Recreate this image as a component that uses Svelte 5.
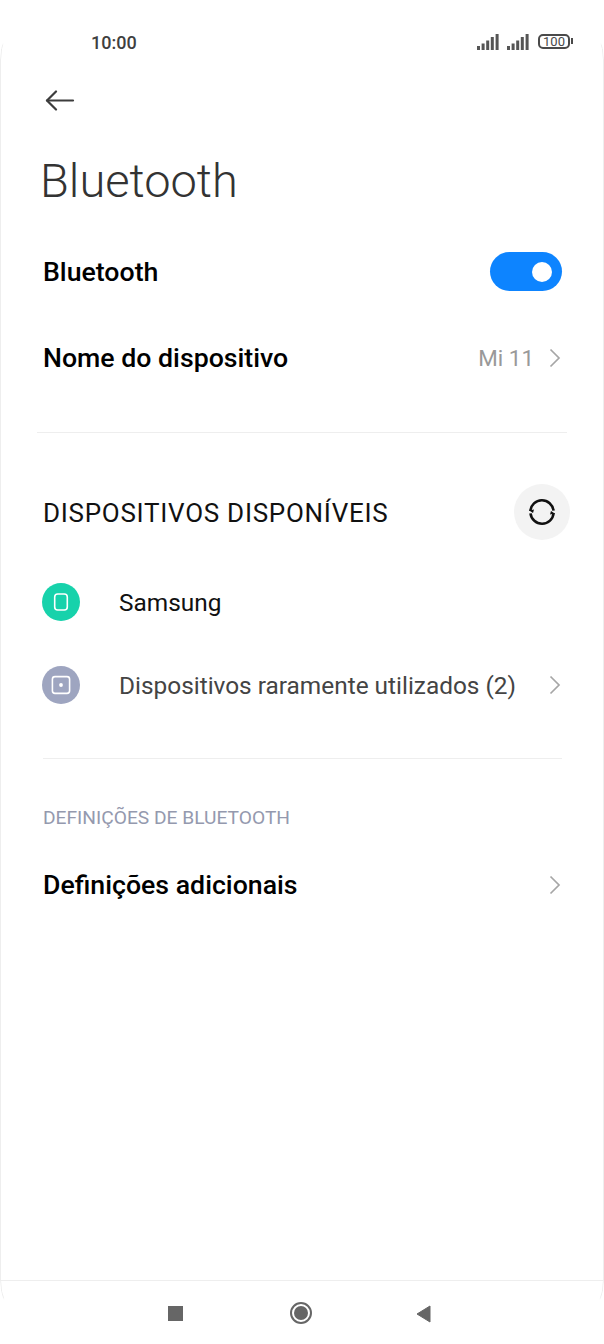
<script>
  const cellular = [0, 1];
</script>

<div class="phone">
  <div class="screen">
    <header class="status">
      <span class="time">10:00</span>
      <div class="status-icons">
        {#each cellular as sim}
          <svg class="signal" width="22" height="16" viewBox="0 0 22 16" data-sim={sim}>
            <rect x="0" y="12" width="3" height="4" />
            <rect x="4.6" y="9.5" width="3" height="6.5" />
            <rect x="9.2" y="6.5" width="3" height="9.5" />
            <rect x="13.8" y="3" width="3" height="13" />
            <rect x="18.6" y="0" width="3" height="16" />
          </svg>
        {/each}
        <div class="battery"><span>100</span></div>
      </div>
    </header>

    <button class="back" aria-label="Back">
      <svg width="30" height="21" viewBox="0 0 30 21" fill="none" stroke="#3c3c3c" stroke-width="2.2" stroke-linecap="round" stroke-linejoin="round">
        <path d="M2 10.5H28" />
        <path d="M11 1.5L2 10.5L11 19.5" />
      </svg>
    </button>

    <h1>Bluetooth</h1>

    <div class="row toggle-row">
      <span class="label">Bluetooth</span>
      <div class="switch"><i></i></div>
    </div>

    <div class="row name-row">
      <span class="label">Nome do dispositivo</span>
      <span class="value">Mi 11</span>
      <svg class="chev" width="12" height="20" viewBox="0 0 12 20"><path d="M1.5 1.5L10 10L1.5 18.5" /></svg>
    </div>

    <hr class="wide" />

    <div class="section-head">
      <span>DISPOSITIVOS DISPONÍVEIS</span>
      <div class="refresh">
        <svg width="28" height="28" viewBox="0 0 28 28" fill="none" stroke="#111" stroke-width="2.6">
          <path d="M2.4 13A11.6 11.6 0 0 1 25.5 12.6" />
          <path d="M25.6 15A11.6 11.6 0 0 1 2.5 15.4" />
          <path d="M1.2 12.6L6 11.4L5 15Z" fill="#111" stroke="none" />
          <path d="M26.8 15.4L22 16.6L23 13Z" fill="#111" stroke="none" />
        </svg>
      </div>
    </div>

    <div class="device samsung">
      <div class="dot green">
        <svg width="38" height="38" viewBox="0 0 38 38" fill="none" stroke="#fff" stroke-width="1.6"><rect x="12.7" y="11" width="12.6" height="16" rx="3" /></svg>
      </div>
      <span class="device-name">Samsung</span>
    </div>

    <div class="device rare">
      <div class="dot grey">
        <svg width="38" height="38" viewBox="0 0 38 38" fill="none" stroke="#fff" stroke-width="1.6"><rect x="10.4" y="10.6" width="17.2" height="16.8" rx="2.6" /><circle cx="19" cy="19" r="1.9" fill="#fff" stroke="none" /></svg>
      </div>
      <span class="device-name muted">Dispositivos raramente utilizados (2)</span>
      <svg class="chev" width="12" height="20" viewBox="0 0 12 20"><path d="M1.5 1.5L10 10L1.5 18.5" /></svg>
    </div>

    <hr class="narrow" />

    <div class="small-head">DEFINIÇÕES DE BLUETOOTH</div>

    <div class="row extra-row">
      <span class="label">Definições adicionais</span>
      <svg class="chev" width="12" height="20" viewBox="0 0 12 20"><path d="M1.5 1.5L10 10L1.5 18.5" /></svg>
    </div>
  </div>

  <nav class="navbar">
    <span class="square"></span>
    <span class="home"><i></i></span>
    <svg class="tri" width="15" height="18" viewBox="0 0 15 18"><path d="M14 1V17L1 9Z" fill="#666" stroke="#666" stroke-linejoin="round" /></svg>
  </nav>
</div>

<style>
  :global(body) {
    margin: 0;
    background: #fff;
  }
  .phone {
    width: 604px;
    height: 1344px;
    display: flex;
    flex-direction: column;
    position: relative;
    font-family: Roboto, "Liberation Sans", sans-serif;
    color: #000;
    overflow: hidden;
  }
  /* faint outline of the device glass, only visible along the sides */
  .phone::before {
    content: "";
    position: absolute;
    left: 0;
    right: 0;
    top: 0;
    height: 1340px;
    box-sizing: border-box;
    border: 1px solid #eeeeee;
    border-radius: 60px;
    pointer-events: none;
    mask-image: linear-gradient(to bottom, transparent 43px, #000 46px, #000 1297px, transparent 1300px);
  }
  .screen {
    flex: 1;
    min-height: 0;
    box-sizing: border-box;
    padding: 0 42px;
    display: flex;
    flex-direction: column;
  }
  .status {
    height: 26px;
    margin-top: 29px;
    display: flex;
    align-items: center;
    justify-content: space-between;
    margin-left: 49px;
    margin-right: -13px;
  }
  .time {
    font-size: 18px;
    font-weight: 500;
    color: #3f3f3f;
  }
  .status-icons {
    display: flex;
    align-items: center;
    gap: 8px;
  }
  .signal rect {
    fill: #555;
  }
  .battery {
    width: 32px;
    height: 15px;
    box-sizing: border-box;
    margin: -2px 5px 0 1px;
    border: 2px solid #4a4a4a;
    border-radius: 5px;
    position: relative;
    display: flex;
    align-items: center;
    justify-content: center;
    font-size: 13px;
    line-height: 1;
    color: #4a4a4a;
  }
  .battery::after {
    content: "";
    position: absolute;
    right: -5px;
    top: 2.5px;
    width: 2px;
    height: 6px;
    background: #4a4a4a;
  }
  .back {
    align-self: flex-start;
    margin: 35px 0 0 3px;
    padding: 0;
    border: 0;
    background: none;
    display: flex;
  }
  h1 {
    margin: 42px 0 0 -2px;
    font-size: 47px;
    line-height: 56px;
    font-weight: 300;
    color: #333;
    letter-spacing: 0;
  }
  .row {
    display: flex;
    align-items: center;
  }
  .label {
    font-size: 26.7px;
    font-weight: 500;
    flex: 1;
    line-height: 30px;
    margin-left: 1px;
  }
  .toggle-row {
    margin-top: 43px;
    height: 39px;
  }
  .switch {
    width: 72px;
    height: 39px;
    border-radius: 20px;
    background: #0d84ff;
    position: relative;
  }
  .switch i {
    position: absolute;
    right: 10px;
    top: 10px;
    width: 20px;
    height: 20px;
    border-radius: 50%;
    background: #fff;
  }
  .name-row {
    margin-top: 47px;
    height: 40px;
  }
  .value {
    font-size: 22.4px;
    color: #999;
    margin-right: 15px;
  }
  .chev {
    flex: none;
    margin-right: 1px;
  }
  .chev path {
    fill: none;
    stroke: #a6a6a6;
    stroke-width: 1.7;
  }
  hr {
    border: 0;
    height: 1px;
    background: #eeeeee;
    margin: 0;
  }
  hr.wide {
    margin: 54px -5px 0;
  }
  .section-head {
    margin-top: 51px;
    height: 56px;
    display: flex;
    align-items: center;
    justify-content: space-between;
    font-size: 26px;
    letter-spacing: 0.72px;
    color: #111;
    margin-right: -8px;
  }
  .section-head span {
    margin: 2px 0 0 1px;
  }
  .refresh {
    width: 56px;
    height: 56px;
    border-radius: 50%;
    background: #f3f3f3;
    display: flex;
    align-items: center;
    justify-content: center;
  }
  .device {
    display: flex;
    align-items: center;
    height: 38px;
  }
  .samsung {
    margin-top: 43px;
  }
  .rare {
    margin-top: 45px;
  }
  .dot {
    width: 38px;
    height: 38px;
    border-radius: 50%;
    flex: none;
    margin-right: 39px;
  }
  .dot svg {
    display: block;
  }
  .green {
    background: #17d2ab;
  }
  .grey {
    background: #9ea5c0;
  }
  .device-name {
    font-size: 24.4px;
    color: #111;
    flex: 1;
  }
  .muted {
    color: #444;
  }
  hr.narrow {
    margin: 54px 0 0 1px;
  }
  .small-head {
    margin: 48px 0 0 1px;
    font-size: 19.2px;
    line-height: 22px;
    color: #9499ae;
  }
  .extra-row {
    margin-top: 36px;
    height: 40px;
  }
  .navbar {
    flex: none;
    height: 64px;
    border-top: 1px solid #eeeeee;
    display: flex;
    align-items: center;
    box-sizing: border-box;
    padding-left: 168px;
  }
  .square {
    width: 15px;
    height: 15px;
    background: #666;
    margin: 2px 107px 0 0;
  }
  .home {
    width: 22px;
    height: 22px;
    box-sizing: border-box;
    border: 2px solid #666;
    border-radius: 50%;
    display: flex;
    align-items: center;
    justify-content: center;
    margin-right: 104px;
  }
  .home i {
    width: 14px;
    height: 14px;
    border-radius: 50%;
    background: #666;
  }
  .tri {
    margin-top: 2px;
  }
</style>
